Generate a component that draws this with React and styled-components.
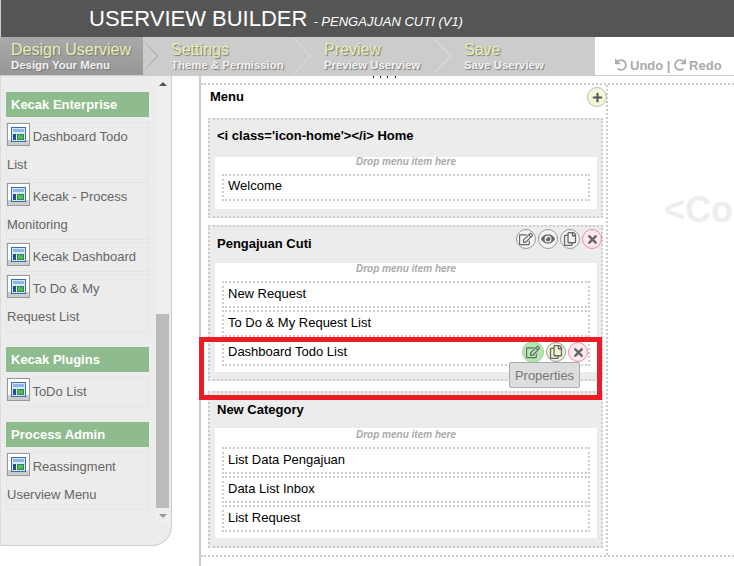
import React from "react";
import styled, { createGlobalStyle } from "styled-components";
import { FaUndo, FaRedo, FaPlus, FaRegEdit, FaEye, FaRegCopy, FaTimes } from "react-icons/fa";

const GlobalStyle = createGlobalStyle`
  html, body {
    margin: 0;
    padding: 0;
    height: 566px;
    overflow: hidden;
    background: #fff;
    font-family: "Liberation Sans", Arial, sans-serif;
  }
`;

const Page = styled.div`
  width: 734px;
  height: 566px;
  display: flex;
  flex-direction: column;
  overflow: hidden;
`;

const Header = styled.header`
  height: 37px;
  flex: none;
  box-sizing: border-box;
  padding-left: 88px;
  background: #555;
  border-left: 1px solid #ccc;
  color: #fff;
  font-size: 22px;
  line-height: 37px;
  white-space: nowrap;
  small {
    font-size: 13px;
    font-style: italic;
    margin-left: 6px;
  }
`;

const StepBar = styled.nav`
  height: 39px;
  flex: none;
  display: flex;
  box-sizing: border-box;
  border-bottom: 1px solid #ccc;
`;

const Step = styled.div`
  position: relative;
  width: ${(p) => p.$width}px;
  box-sizing: border-box;
  padding: 3px 0 0 ${(p) => p.$pad}px;
  background: ${(p) => (p.$active ? "linear-gradient(#a9a9a9, #979797)" : "#ccc")};
  white-space: nowrap;
  &::after {
    content: "";
    display: ${(p) => (p.$last ? "none" : "block")};
    position: absolute;
    z-index: 1;
    top: 0;
    left: 100%;
    width: 18px;
    height: 38px;
    margin-left: -${(p) => p.$arrowIn}px;
    background: ${(p) => (p.$active ? "#9d9d9d" : "#ddd")};
    clip-path: polygon(0 0, 100% 50%, 0 100%, ${(p) => (p.$active ? "0 100%" : "0 97%")}, 94% 50%, ${(p) => (p.$active ? "0 0" : "0 3%")});
  }
`;

const StepTitle = styled.div`
  font-size: 16px;
  line-height: 19px;
  color: #e8efb1;
  text-shadow: 1px 1px 1px #777;
`;

const StepSub = styled.div`
  font-size: 11.4px;
  line-height: 13px;
  font-weight: bold;
  color: #f2f2f2;
  text-shadow: 1px 1px 1px #777;
`;

const History = styled.div`
  flex: 1;
  box-sizing: border-box;
  padding: 21px 0 0 20px;
  font-size: 13px;
  line-height: 15px;
  font-weight: bold;
  color: #aaa;
  white-space: nowrap;
  svg {
    font-size: 12px;
    vertical-align: -1px;
    margin-right: 3px;
  }
`;

const Workspace = styled.div`
  flex: 1;
  display: flex;
  min-height: 0;
`;

const Sidebar = styled.aside`
  width: 172px;
  height: 470px;
  flex: none;
  display: flex;
  box-sizing: border-box;
  background: #ececec;
  border-left: 1px solid #ddd;
  border-right: 1px solid #ccc;
  border-bottom: 1px solid #ccc;
  border-bottom-right-radius: 20px;
`;

const Palette = styled.div`
  width: 155px;
  flex: none;
  box-sizing: border-box;
  padding: 16px 7px 0 5px;
`;

const Group = styled.section`
  margin-bottom: 15px;
`;

const GroupTitle = styled.h3`
  margin: 0 0 5px;
  height: 25px;
  padding-left: 5px;
  background: #8fbc8f;
  color: #fff;
  font-size: 13px;
  font-weight: bold;
  line-height: 25px;
`;

const PaletteItem = styled.div`
  box-sizing: border-box;
  width: 143px;
  margin-bottom: 2px;
  border: 1px dotted #ddd;
  color: #666;
  font-size: 13px;
  line-height: 28px;
  &:last-child {
    margin-bottom: 0;
  }
`;

const IconBox = styled.span`
  display: inline-flex;
  align-items: center;
  justify-content: center;
  width: 23px;
  height: 23px;
  box-sizing: border-box;
  margin-right: -1px;
  vertical-align: -1px;
  background: linear-gradient(#fff 76%, #ccc 76%);
  border: 1px solid #999;
`;

const Scrollbar = styled.div`
  width: 13px;
  height: 449px;
  flex: none;
  display: flex;
  flex-direction: column;
  background: #eee;
`;

const ScrollArrow = styled.div`
  height: 16px;
  flex: none;
  display: flex;
  align-items: center;
  justify-content: center;
  &::before {
    content: "";
    border-left: 4px solid transparent;
    border-right: 4px solid transparent;
    ${(p) => (p.$down ? "border-top: 4px solid #999;" : "border-bottom: 4px solid #555;")}
  }
`;

const ScrollThumb = styled.div`
  height: 194px;
  margin-top: ${(p) => p.$top}px;
  background: #bbb;
`;

const Canvas = styled.main`
  position: relative;
  flex: 1;
  margin-left: 27px;
  padding-top: 7px;
  border-left: 2px solid #ccc;
  min-width: 0;
`;

const ClippedMarks = styled.div`
  position: absolute;
  top: 0;
  left: 172px;
  width: 23px;
  height: 2px;
  background: repeating-linear-gradient(90deg, #222 0 1px, transparent 1px 7.2px);
`;

const Board = styled.div`
  height: 470px;
  display: flex;
  border-top: 2px dotted #ccc;
  border-bottom: 2px dotted #ccc;
`;

const MenuColumn = styled.div`
  width: 407px;
  flex: none;
  box-sizing: border-box;
  padding: 0 3px 0 7px;
  border-right: 2px dotted #ccc;
`;

const MenuHead = styled.div`
  height: 33px;
  display: flex;
  align-items: flex-start;
  justify-content: space-between;
  padding-left: 2px;
  color: #000;
  font-size: 13px;
  font-weight: bold;
  line-height: 23px;
`;

const RoundButton = styled.span`
  width: ${(p) => p.$dia || 20}px;
  height: ${(p) => p.$dia || 20}px;
  flex: none;
  display: inline-flex;
  align-items: center;
  justify-content: center;
  box-sizing: border-box;
  border-radius: 50%;
  border: 1px solid ${(p) => p.$line || "#999"};
  background: ${(p) => p.$bg || "#f4f4f4"};
  color: #666;
  font-size: ${(p) => p.$size || 14}px;
`;

const AddButton = styled(RoundButton)`
  margin: 2px -4px 0 0;
  color: #555;
`;

const Category = styled.section`
  position: relative;
  box-sizing: border-box;
  height: ${(p) => p.$height}px;
  margin-bottom: ${(p) => p.$gap}px;
  padding: 0 5px;
  background: #ececec;
  border: 2px dotted #ccc;
`;

const CategoryTitle = styled.h4`
  margin: 0;
  height: ${(p) => p.$height}px;
  padding-left: 2px;
  color: #000;
  font-size: 13px;
  font-weight: bold;
  line-height: ${(p) => p.$line}px;
`;

const DropZone = styled.div`
  box-sizing: border-box;
  width: 382px;
  height: ${(p) => p.$height}px;
  padding: 0 7px;
  background: #fff;
`;

const DropHint = styled.div`
  height: ${(p) => p.$height}px;
  color: #aaa;
  font-size: 10px;
  font-style: italic;
  font-weight: bold;
  line-height: ${(p) => p.$line}px;
  text-align: center;
`;

const MenuItem = styled.div`
  position: relative;
  box-sizing: border-box;
  height: 27px;
  margin-bottom: 2px;
  padding-left: 4px;
  border: 2px dotted #ccc;
  color: #000;
  font-size: 13px;
  line-height: ${(p) => p.$line}px;
  &:last-child {
    margin-bottom: 0;
  }
`;

const Actions = styled.div`
  position: absolute;
  display: flex;
  align-items: center;
  gap: ${(p) => p.$gap}px;
  top: ${(p) => p.$top}px;
  right: ${(p) => p.$right}px;
`;

const Tooltip = styled.div`
  position: absolute;
  z-index: 2;
  left: 285px;
  top: 21px;
  box-sizing: border-box;
  width: 71px;
  height: 26px;
  background: #ddd;
  border: 1px solid #aaa;
  border-radius: 2px;
  color: #777;
  font-size: 13px;
  line-height: 26px;
  text-align: center;
`;

const Callout = styled.div`
  position: absolute;
  z-index: 3;
  top: 261px;
  left: -2px;
  box-sizing: border-box;
  width: 403px;
  height: 63px;
  border: 5px solid #ed1c24;
  pointer-events: none;
`;

const Placeholder = styled.div`
  flex: 1;
  min-width: 0;
  overflow: hidden;
  padding: 105px 0 0 56px;
  color: #eee;
  font-size: 36px;
  font-weight: bold;
  line-height: 40px;
  white-space: nowrap;
`;

function WindowIcon() {
  return (
    <svg width="15" height="15" viewBox="0 0 15 15">
      <rect x="0.5" y="0.5" width="14" height="14" fill="#dbe8f8" stroke="#3a6cb0" />
      <rect x="2" y="2" width="11" height="3" fill="#8fb5e6" />
      <rect x="2" y="7" width="3" height="6" fill="#1f4d94" />
      <rect x="6" y="7" width="7" height="6" fill="#2e8b3e" />
      <rect x="7" y="8" width="5" height="4" fill="#55b85a" />
    </svg>
  );
}

const steps = [
  { title: "Design Userview", sub: "Design Your Menu", width: 143, pad: 11, arrowIn: 3, active: true },
  { title: "Settings", sub: "Theme & Permission", width: 153, pad: 28, arrowIn: 3 },
  { title: "Preview", sub: "Preview Userview", width: 140, pad: 28, arrowIn: 3 },
  { title: "Save", sub: "Save Userview", width: 159, pad: 28, arrowIn: 0, last: true },
];

const palette = [
  { name: "Kecak Enterprise", items: ["Dashboard Todo List", "Kecak - Process Monitoring", "Kecak Dashboard", "To Do & My Request List"] },
  { name: "Kecak Plugins", items: ["ToDo List"] },
  { name: "Process Admin", items: ["Reassingment Userview Menu"] },
];

const categories = [
  { title: "<i class='icon-home'></i> Home", items: ["Welcome"], height: 100, gap: 7, titleHeight: 37, titleLine: 32, zone: 52, hint: 17, hintLine: 9, itemLine: 20 },
  { title: "Pengajuan Cuti", items: ["New Request", "To Do & My Request List", "Dashboard Todo List"], height: 156, gap: 10, titleHeight: 36, titleLine: 34, zone: 109, hint: 18, hintLine: 11, itemLine: 22, tools: true },
  { title: "New Category", items: ["List Data Pengajuan", "Data List Inbox", "List Request"], height: 157, gap: 0, titleHeight: 35, titleLine: 34, zone: 110, hint: 19, hintLine: 13, itemLine: 22 },
];

export default function App() {
  return (
    <Page>
      <GlobalStyle />
      <Header>
        USERVIEW BUILDER<small>- PENGAJUAN CUTI (V1)</small>
      </Header>
      <StepBar>
        {steps.map((s) => (
          <Step key={s.title} $width={s.width} $pad={s.pad} $arrowIn={s.arrowIn} $active={s.active} $last={s.last}>
            <StepTitle>{s.title}</StepTitle>
            <StepSub>{s.sub}</StepSub>
          </Step>
        ))}
        <History>
          <FaUndo />Undo | <FaRedo />Redo
        </History>
      </StepBar>
      <Workspace>
        <Sidebar>
          <Palette>
            {palette.map((g) => (
              <Group key={g.name}>
                <GroupTitle>{g.name}</GroupTitle>
                {g.items.map((item) => (
                  <PaletteItem key={item}>
                    <IconBox>
                      <WindowIcon />
                    </IconBox>{" "}
                    {item}
                  </PaletteItem>
                ))}
              </Group>
            ))}
          </Palette>
          <Scrollbar>
            <ScrollArrow />
            <ScrollThumb $top={222} />
            <ScrollArrow $down />
          </Scrollbar>
        </Sidebar>
        <Canvas>
          <ClippedMarks />
          <Board>
            <MenuColumn>
              <MenuHead>
                Menu
                <AddButton $bg="#f3f7d9" $line="#bbb" $size={11}>
                  <FaPlus />
                </AddButton>
              </MenuHead>
              {categories.map((c) => (
                <Category key={c.title} $height={c.height} $gap={c.gap}>
                  <CategoryTitle $height={c.titleHeight} $line={c.titleLine}>{c.title}</CategoryTitle>
                  {c.tools && (
                    <Actions $top={2} $right={-1} $gap={2}>
                      <RoundButton><FaRegEdit /></RoundButton>
                      <RoundButton><FaEye /></RoundButton>
                      <RoundButton><FaRegCopy /></RoundButton>
                      <RoundButton $bg="#fbe9ee" $line="#f08aa0" $size={13}><FaTimes /></RoundButton>
                    </Actions>
                  )}
                  <DropZone $height={c.zone}>
                    <DropHint $height={c.hint} $line={c.hintLine}>Drop menu item here</DropHint>
                    {c.items.map((item) => (
                      <MenuItem key={item} $line={c.itemLine}>
                        {item}
                        {item === "Dashboard Todo List" && (
                          <>
                            <Actions $top={0} $right={0} $gap={2}>
                              <RoundButton $dia={22} $bg="#b5e8b0" $line="#9ccf98"><FaRegEdit /></RoundButton>
                              <RoundButton $bg="#eef3d0"><FaRegCopy /></RoundButton>
                              <RoundButton $bg="#fbe9ee" $line="#f08aa0" $size={13}><FaTimes /></RoundButton>
                            </Actions>
                            <Tooltip>Properties</Tooltip>
                          </>
                        )}
                      </MenuItem>
                    ))}
                  </DropZone>
                </Category>
              ))}
            </MenuColumn>
            <Placeholder>&lt;Content&gt;</Placeholder>
          </Board>
          <Callout />
        </Canvas>
      </Workspace>
    </Page>
  );
}
